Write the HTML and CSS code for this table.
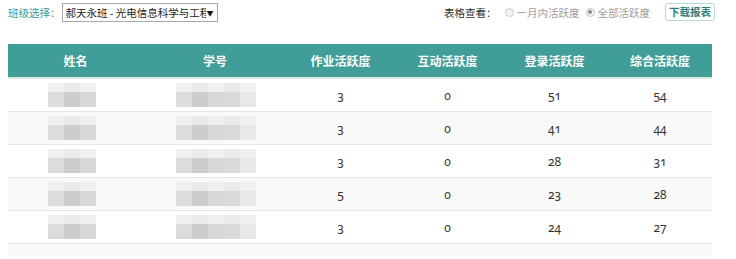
FILE: index.html
```html
<!DOCTYPE html>
<html lang="zh">
<head>
<meta charset="utf-8">
<link rel="stylesheet" href="styles.css">
</head>
<body>
<div class="page">
  <div class="toolbar">
    <div class="class-pick">
      <span class="pick-label">班级选择：</span>
      <div class="select"><span class="select-text">郝天永班 - 光电信息科学与工程</span><span class="arrow">▼</span></div>
    </div>
    <div class="view">
      <span class="view-label">表格查看：</span>
      <span class="radio"></span><span class="radio-text">一月内活跃度</span>
      <span class="radio checked"></span><span class="radio-text">全部活跃度</span>
      <span class="btn">下载报表</span>
    </div>
  </div>
  <table class="grid">
    <thead>
      <tr><th class="c1">姓名</th><th class="c2">学号</th><th>作业活跃度</th><th>互动活跃度</th><th>登录活跃度</th><th class="c6">综合活跃度</th></tr>
    </thead>
    <tbody>
      <tr><td><div class="mosaic m3"><i></i><i></i><i></i><b></b><b></b><b></b></div></td><td><div class="mosaic m5"><i></i><i></i><i></i><i></i><i></i><b></b><b></b><b></b><b></b><b></b></div></td><td class="num">3</td><td class="num">0</td><td class="num">51</td><td class="num">54</td></tr>
      <tr><td><div class="mosaic m3"><i></i><i></i><i></i><b></b><b></b><b></b></div></td><td><div class="mosaic m5"><i></i><i></i><i></i><i></i><i></i><b></b><b></b><b></b><b></b><b></b></div></td><td class="num">3</td><td class="num">0</td><td class="num">41</td><td class="num">44</td></tr>
      <tr><td><div class="mosaic m3"><i></i><i></i><i></i><b></b><b></b><b></b></div></td><td><div class="mosaic m5"><i></i><i></i><i></i><i></i><i></i><b></b><b></b><b></b><b></b><b></b></div></td><td class="num">3</td><td class="num">0</td><td class="num">28</td><td class="num">31</td></tr>
      <tr><td><div class="mosaic m3"><i></i><i></i><i></i><b></b><b></b><b></b></div></td><td><div class="mosaic m5"><i></i><i></i><i></i><i></i><i></i><b></b><b></b><b></b><b></b><b></b></div></td><td class="num">5</td><td class="num">0</td><td class="num">23</td><td class="num">28</td></tr>
      <tr><td><div class="mosaic m3"><i></i><i></i><i></i><b></b><b></b><b></b></div></td><td><div class="mosaic m5"><i></i><i></i><i></i><i></i><i></i><b></b><b></b><b></b><b></b><b></b></div></td><td class="num">3</td><td class="num">0</td><td class="num">24</td><td class="num">27</td></tr>
      <tr class="cut"><td></td><td></td><td></td><td></td><td></td><td></td></tr>
    </tbody>
  </table>
</div>
</body>
</html>
```
FILE: styles.css
```css
html, body { margin: 0; padding: 0; background: #fff; }
body { padding: 0 8px; font-family: "Noto Sans CJK SC", "Noto Sans", sans-serif; font-size: 12px; color: #333; overflow: hidden; }
.page { width: 704px; }

.toolbar { display: flex; justify-content: space-between; align-items: center; height: 24px; width: 707px; font-size: 10.5px; }
.class-pick { display: flex; align-items: center; padding-top: 1px; }
.pick-label { color: #3a9a94; }
.select { display: flex; align-items: center; width: 154px; height: 17px; border: 1px solid #a9a9a9; margin-left: 1px; background: #fff; }
.select-text { flex: 1; overflow: hidden; white-space: nowrap; padding-left: 3px; color: #222; line-height: 17px; }
.arrow { font-size: 7px; width: 9px; text-align: center; color: #111; padding-right: 2px; }

.view { display: flex; align-items: center; }
.view-label { color: #333; margin-right: 8px; }
.radio { width: 9px; height: 9px; border: 1px solid #c8c8c8; border-radius: 50%; background: #f3f3f3; margin-right: 3px; box-sizing: border-box; position: relative; }
.radio.checked::after { content: ""; position: absolute; left: 1.5px; top: 1.5px; width: 4px; height: 4px; border-radius: 50%; background: #8a8a8a; }
.radio-text { color: #a0a0a0; margin-right: 6px; }
.radio-text + .btn { margin-left: 9px; }
.btn { border: 1px solid #b9d9d6; border-radius: 3px; color: #2f7f79; padding: 0 3px; line-height: 16px; height: 16px; margin-top: 0; font-weight: bold; }

.grid { margin-top: 20px; width: 704px; border-collapse: collapse; table-layout: fixed; }
.grid th { background: #409d97; color: #fff; font-weight: bold; height: 33px; padding: 0; border-bottom: 2px solid #dfe6e5; font-size: 12px; }
.grid th.c1 { width: 135px; }
.grid th.c2 { width: 144px; }
.grid th.c6 { width: 104px; }
.grid td { height: 32px; padding: 0; border-bottom: 1px solid #e6e6e6; text-align: center; }
.grid tbody tr:nth-child(even) td { background: #f9f9f9; }
.grid tr.cut td { height: 12px; border-bottom: none; }
.num { font-family: "Noto Sans", "DejaVu Serif", serif; font-variant-numeric: oldstyle-nums; font-size: 12px; color: #333; }

.mosaic { display: grid; grid-template-rows: 9px 15px; margin: 0 auto; }
.mosaic.m3 { grid-template-columns: repeat(3, 16px); width: 48px; margin-left: 40px; }
.mosaic.m5 { grid-template-columns: repeat(5, 16px); width: 80px; margin-left: 33px; }
.mosaic i { background: #f0f0f0; }
.mosaic i:nth-child(2n) { background: #eaeaea; }
.mosaic b { background: #dcdcdc; }
.mosaic b:nth-of-type(2) { background: #cdcdcd; }
.mosaic b:nth-of-type(3) { background: #d8d8da; }
.mosaic b:nth-of-type(4) { background: #dadada; }
.mosaic b:nth-of-type(5) { background: #e8e8ea; }
```
